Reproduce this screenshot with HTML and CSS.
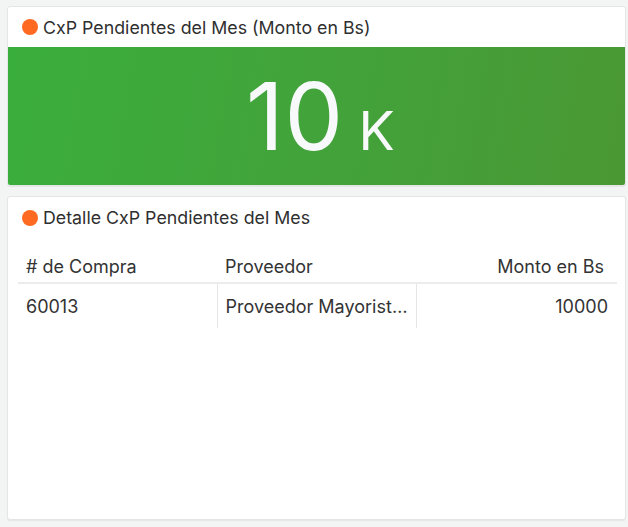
FILE: index.html
```html
<!DOCTYPE html>
<html lang="es">
<head>
<meta charset="utf-8">
<link rel="stylesheet" href="styles.css">
</head>
<body>
<div class="dash">
  <section class="panel kpi">
    <header class="panel-head"><span class="dot"></span><span class="title">CxP Pendientes del Mes (Monto en Bs)</span></header>
    <div class="kpi-body"><span class="num">10</span><span class="unit">K</span></div>
  </section>
  <section class="panel detail">
    <header class="panel-head"><span class="dot"></span><span class="title">Detalle CxP Pendientes del Mes</span></header>
    <table class="grid">
      <thead>
        <tr><th class="c1">&#35; de Compra</th><th class="c2">Proveedor</th><th class="c3">Monto en Bs</th></tr>
      </thead>
      <tbody>
        <tr><td class="c1">60013</td><td class="c2"><span class="ell">Proveedor Mayorista Nacional</span></td><td class="c3">10000</td></tr>
      </tbody>
    </table>
  </section>
</div>
</body>
</html>
```
FILE: styles.css
```css
html, body { margin: 0; padding: 0; }
body {
  background: #f3f4f4;
  font-family: Inter, "Noto Sans", sans-serif;
  color: #333;
  width: 628px;
  height: 527px;
  overflow: hidden;
}
.dash {
  padding: 6px 2px 0 7px;
  display: flex;
  flex-direction: column;
  gap: 10px;
}
.panel {
  background: #fff;
  border: 1px solid #e4e5e5;
  border-radius: 3px;
  box-shadow: 0 1px 1px rgba(0,0,0,0.06);
  width: 617px;
  box-sizing: content-box;
  overflow: hidden;
}
.panel-head {
  display: flex;
  align-items: center;
  height: 41px;
  padding-left: 14px;
  gap: 5px;
}
.dot {
  width: 16px;
  height: 16px;
  border-radius: 50%;
  background: #ff6a22;
  flex: none;
}
.title {
  font-size: 17.8px;
  color: #2f2f2f;
}
.kpi { height: 178px; }
.kpi .panel-head { height: 40px; }
.kpi-body {
  height: 138px;
  background: linear-gradient(100deg, #3aae3c 0%, #43a23a 55%, #4a9834 100%);
  display: flex;
  justify-content: center;
  align-items: baseline;
  color: #f8f9fb;
  padding-left: 8px;
}
.num {
  font-size: 93px;
  line-height: 138px;
  font-weight: 400;
  letter-spacing: 0.5px;
}
.unit {
  font-size: 54px;
  margin-left: 15px;
}
.detail { height: 322px; }
.grid {
  margin: 6px 0 0 10px;
  width: 599px;
  border-collapse: collapse;
  table-layout: fixed;
  font-size: 18px;
  color: #333;
}
.grid th {
  font-weight: 400;
  text-align: left;
  height: 32px;
  padding: 6px 8px 0;
  border-bottom: 2px solid #ececec;
  vertical-align: middle;
}
.grid td {
  height: 44px;
  padding: 0 8px;
  vertical-align: middle;
}
.grid td + td { border-left: 1px solid #e6e6e6; }
.grid .c1 { width: 183px; }
.grid .c2 { width: 183px; }
.grid th.c3 { text-align: right; padding-right: 13px; }
.grid td.c3 { text-align: right; padding-right: 9px; }
.ell {
  display: block;
  white-space: nowrap;
  overflow: hidden;
  text-overflow: ellipsis;
}
```
